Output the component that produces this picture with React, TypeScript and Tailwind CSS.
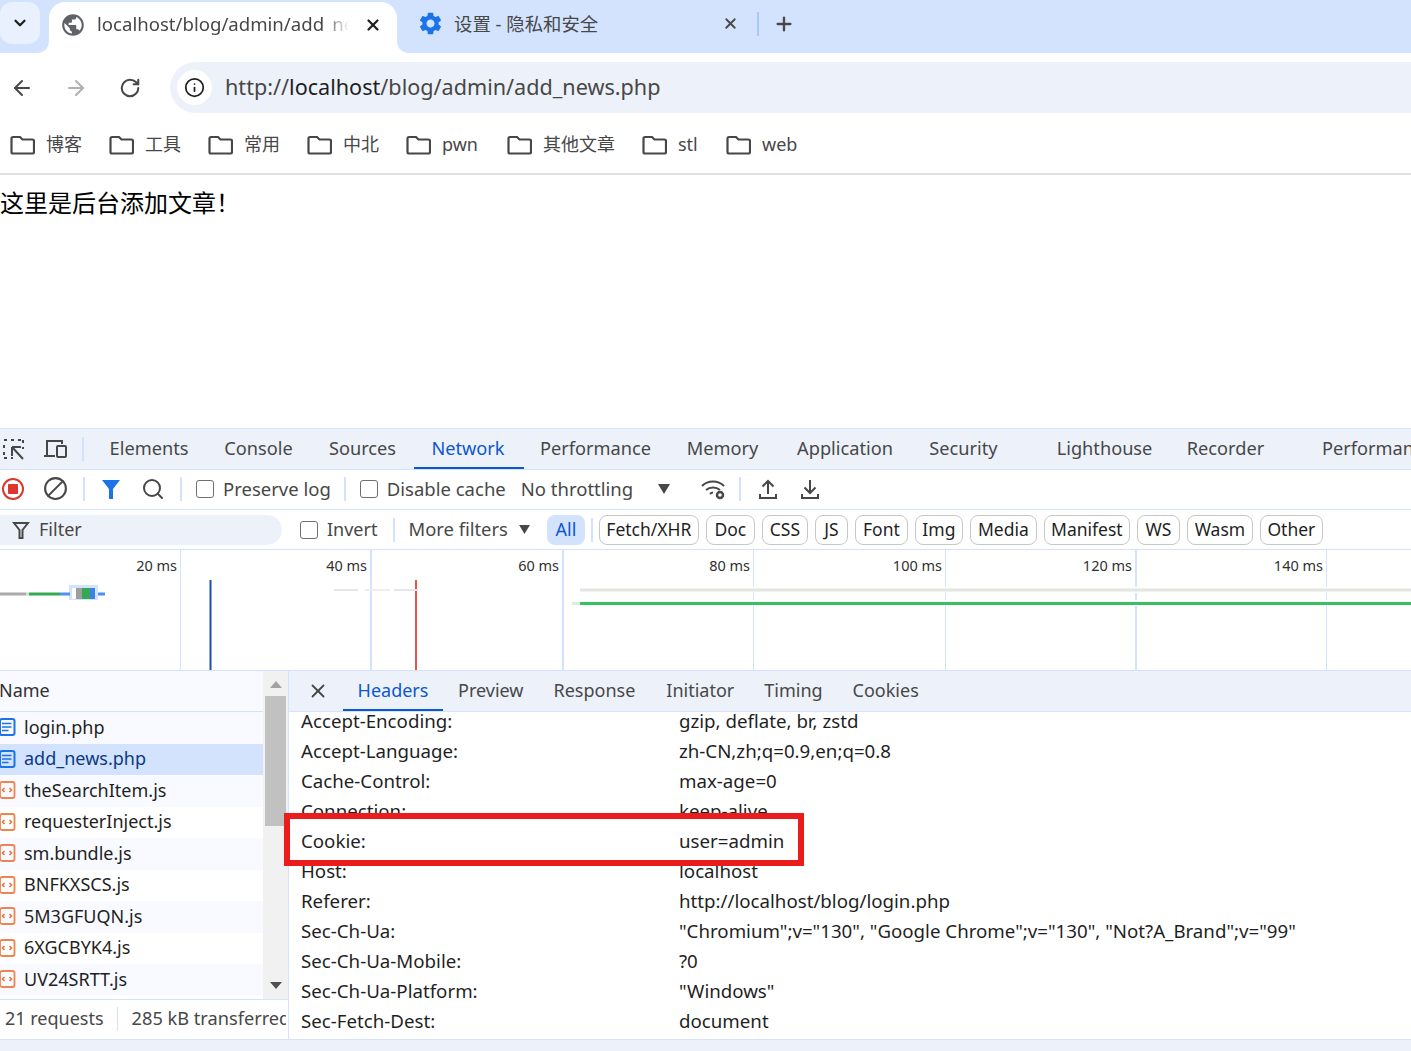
import React from 'react'
import { ArrowLeft, ArrowRight, Ban, ChevronDown, Info, Plus, RotateCw, Search, X } from 'lucide-react'
import { MdPublic, MdSettings } from 'react-icons/md'

const bookmarks = [
  { label: '博客', cls: '' },
  { label: '工具', cls: '' },
  { label: '常用', cls: '' },
  { label: '中北', cls: '' },
  { label: 'pwn', cls: 'w-[38px]' },
  { label: '其他文章', cls: '' },
  { label: 'stl', cls: 'w-[21px]' },
  { label: 'web', cls: '' },
]

const tabs = [
  { label: 'Elements', left: 'ml-[26px]', w: 'w-[78px]' },
  { label: 'Console', left: 'ml-[36px]', w: 'w-[69px]' },
  { label: 'Sources', left: 'ml-[36px]', w: 'w-[67px]' },
  { label: 'Network', left: 'ml-[35px]', w: 'w-[74px]' },
  { label: 'Performance', left: 'ml-[36px]', w: 'w-[109px]' },
  { label: 'Memory', left: 'ml-[36px]', w: 'w-[73px]' },
  { label: 'Application', left: 'ml-[37px]', w: 'w-[98px]' },
  { label: 'Security', left: 'ml-[35px]', w: 'w-[69px]' },
  { label: 'Lighthouse', left: 'ml-[59px]', w: 'w-[95px]' },
  { label: 'Recorder', left: 'ml-[35px]', w: 'w-[77px]' },
  { label: 'Performance', left: 'ml-[59px]', w: 'w-[109px]' },
]

const chips = [
  { label: 'Fetch/XHR', w: 'w-[100px]' },
  { label: 'Doc', w: 'w-[49px]' },
  { label: 'CSS', w: 'w-[46px]' },
  { label: 'JS', w: 'w-[33px]' },
  { label: 'Font', w: 'w-[53px]' },
  { label: 'Img', w: 'w-[48px]' },
  { label: 'Media', w: 'w-[67px]' },
  { label: 'Manifest', w: 'w-[86px]' },
  { label: 'WS', w: 'w-[43px]' },
  { label: 'Wasm', w: 'w-[66px]' },
  { label: 'Other', w: 'w-[63px]' },
]

const ticks = [
  { label: '20 ms', cls: 'w-[181px] border-r' },
  { label: '40 ms', cls: 'w-[191px] border-r-2' },
  { label: '60 ms', cls: 'w-[192px] border-r-2' },
  { label: '80 ms', cls: 'w-[190px] border-r' },
  { label: '100 ms', cls: 'w-[192px] border-r' },
  { label: '120 ms', cls: 'w-[191px] border-r-2' },
  { label: '140 ms', cls: 'w-[190px] border-r' },
]

const files = [
  { name: 'login.php', doc: true },
  { name: 'add_news.php', doc: true, selected: true },
  { name: 'theSearchItem.js' },
  { name: 'requesterInject.js' },
  { name: 'sm.bundle.js' },
  { name: 'BNFKXSCS.js' },
  { name: '5M3GFUQN.js' },
  { name: '6XGCBYK4.js' },
  { name: 'UV24SRTT.js' },
]

const headers = [
  ['Accept-Encoding:', 'gzip, deflate, br, zstd'],
  ['Accept-Language:', 'zh-CN,zh;q=0.9,en;q=0.8'],
  ['Cache-Control:', 'max-age=0'],
  ['Connection:', 'keep-alive'],
  ['Cookie:', 'user=admin'],
  ['Host:', 'localhost'],
  ['Referer:', 'http://localhost/blog/login.php'],
  ['Sec-Ch-Ua:', '"Chromium";v="130", "Google Chrome";v="130", "Not?A_Brand";v="99"'],
  ['Sec-Ch-Ua-Mobile:', '?0'],
  ['Sec-Ch-Ua-Platform:', '"Windows"'],
  ['Sec-Fetch-Dest:', 'document'],
]

const Folder = () => (
  <svg width="25" height="20" viewBox="0 0 25 20" fill="none" stroke="#474747" strokeWidth="2.2" className="shrink-0">
    <path d="M3 2h7l2.5 2.5H22.5A1.5 1.5 0 0 1 24 6v11a1.5 1.5 0 0 1-1.5 1.5H3A1.5 1.5 0 0 1 1.5 17V3.5A1.5 1.5 0 0 1 3 2z" />
  </svg>
)

const Checkbox = () => <span className="block w-[18px] h-[18px] rounded-[3px] border-[1.5px] border-[#6f6f6f] bg-white shrink-0" />

const Divider = () => <span className="block w-[2px] h-6 bg-[#d3e3fd] shrink-0" />

const FileIcon = ({ doc }: { doc?: boolean }) =>
  doc ? (
    <svg width="16" height="18" viewBox="0 0 16 18" fill="none" className="shrink-0">
      <rect x="0" y="1" width="14.5" height="16" rx="2" stroke="#1a73e8" strokeWidth="2" />
      <path d="M2 5.5h9.5M2 9h9.5M2 12.5h6.5" stroke="#1a73e8" strokeWidth="1.6" />
    </svg>
  ) : (
    <svg width="16" height="18" viewBox="0 0 16 18" fill="none" className="shrink-0">
      <rect x="0" y="1" width="14.5" height="16" rx="2" stroke="#ee8450" strokeWidth="1.8" />
      <path d="M4.5 7 2.5 9l2 2M9.5 7l2 2-2 2" stroke="#e8703a" strokeWidth="1.5" />
    </svg>
  )

export default function App() {
  return (
    <div className="w-[1411px] h-[1051px] overflow-hidden bg-white text-[#1f1f1f] flex flex-col font-['Noto_Sans','Noto_Sans_CJK_SC',sans-serif]">
      {/* tab strip */}
      <div className="h-[53px] bg-[#d3e3fd] flex shrink-0">
        <div className="w-[40px] h-[42px] mt-[2px] rounded-xl bg-[#e9f0fe] flex items-center justify-center shrink-0">
          <ChevronDown size={18} strokeWidth={3} color="#1f1f1f" />
        </div>
        <div className="relative ml-[9px] mt-[2px] w-[348px] h-[51px] bg-white rounded-t-2xl flex items-center shrink-0 pb-[6px]">
          <svg width="12" height="12" viewBox="0 0 12 12" className="absolute -left-[12px] bottom-0">
            <path d="M12 0v12H0c7 0 12-5 12-12z" fill="#fff" />
          </svg>
          <svg width="12" height="12" viewBox="0 0 12 12" className="absolute -right-[12px] bottom-0">
            <path d="M0 0v12h12C5 12 0 7 0 0z" fill="#fff" />
          </svg>
          <MdPublic size={26} color="#5f6368" className="ml-[11px] shrink-0" />
          <span className="ml-[11px] w-[252px] text-[18.6px] whitespace-nowrap overflow-hidden text-[#474747] pb-[1px] [mask-image:linear-gradient(to_right,black_90%,transparent)]">
            localhost/blog/admin/add<span className="text-transparent">_</span>news.php
          </span>
          <X size={18} strokeWidth={3} color="#1f1f1f" className="ml-[15px] shrink-0" />
        </div>
        <div className="flex items-center ml-[20px] pb-[6px] shrink-0">
          <MdSettings size={27} color="#1a73e8" className="shrink-0" />
          <span className="ml-[10px] w-[268px] text-[18.4px] text-[#474747] pt-[1px]">设置 - 隐私和安全</span>
          <X size={17} strokeWidth={2.5} color="#474747" className="shrink-0" />
          <span className="ml-[18px] w-[2px] h-6 bg-[#a8c7fa]" />
          <Plus size={22} strokeWidth={2.5} color="#474747" className="ml-[14px]" />
        </div>
      </div>

      {/* address bar */}
      <div className="h-[63px] flex items-center shrink-0 pt-[9px] pb-[3px]">
        <ArrowLeft size={24} color="#474747" strokeWidth={2} className="ml-[10px]" />
        <ArrowRight size={24} color="#b0b0b0" strokeWidth={2} className="ml-[30px]" />
        <RotateCw size={22} color="#474747" strokeWidth={2.2} className="ml-[31px]" />
        <div className="ml-[29px] flex-1 h-[51px] bg-[#edf2fa] rounded-l-[26px] flex items-center">
          <span className="ml-[7px] w-[35px] h-[35px] rounded-full bg-white flex items-center justify-center">
            <Info size={21} color="#1f1f1f" strokeWidth={2} />
          </span>
          <span className="ml-[13px] text-[21.6px] text-[#474747]">
            http://<span className="text-[#1f1f1f]">localhost</span>/blog/admin/add_news.php
          </span>
        </div>
      </div>

      {/* bookmarks */}
      <div className="h-[57px] flex items-center pl-[10px] gap-[27px] shrink-0">
        {bookmarks.map((b) => (
          <div key={b.label} className="flex items-center gap-[11px] text-[18px] text-[#474747]">
            <Folder />
            <span className={b.cls}>{b.label}</span>
          </div>
        ))}
      </div>
      <div className="h-[2px] bg-[#e0e0e0] shrink-0" />

      {/* page */}
      <div className="h-[253px] shrink-0 text-[24px] text-black pt-[10px]">这里是后台添加文章！</div>

      {/* devtools tabs */}
      <div className="h-[42px] bg-[#edf2fa] border-y border-[#d3e3fd] flex items-stretch shrink-0 overflow-hidden">
        <div className="flex items-center shrink-0">
          <svg width="26" height="24" viewBox="0 0 26 24" fill="none" stroke="#474747" strokeWidth="2" className="ml-[1px]">
            <path d="M3 3h3M10 3h3M17 3h3M22 3v3M22 10v2M3 8v3M3 15v3M3 21h3M10 21h2" strokeDasharray="3 2" />
            <path d="M11 10h9M11 10v9M11 10l11 12" />
          </svg>
          <svg width="26" height="24" viewBox="0 0 26 24" fill="none" stroke="#474747" strokeWidth="2" className="ml-[15px]">
            <path d="M2 19h11M5 18V4h15v3" />
            <rect x="15" y="9" width="9" height="11" rx="1" />
          </svg>
          <span className="ml-[14px] w-[2px] h-6 bg-[#d3e3fd]" />
        </div>
        {tabs.map((t, i) => (
          <div key={i} className={'relative shrink-0 flex items-center justify-center whitespace-nowrap text-[18.2px] pb-[1px] ' + t.left + ' ' + t.w + (t.label === 'Network' ? ' text-[#0b57d0]' : ' text-[#474747]')}>
            {t.label}
            {t.label === 'Network' && <span className="absolute -left-[17px] -right-[19px] bottom-0 h-[2px] bg-[#0b57d0]" />}
          </div>
        ))}
      </div>

      {/* network toolbar */}
      <div className="h-[40px] border-b border-[#d3e3fd] flex items-center shrink-0 text-[18.5px] text-[#474747] pb-[2px]">
        <svg width="24" height="24" viewBox="0 0 24 24" className="ml-[1px] shrink-0">
          <circle cx="12" cy="12" r="10" fill="none" stroke="#dc362e" strokeWidth="2" />
          <rect x="7" y="7" width="10" height="10" rx="1" fill="#dc362e" />
        </svg>
        <Ban size={25} color="#474747" strokeWidth={2} className="ml-[18px] shrink-0 -scale-x-100" />
        <span className="ml-[15px]"><Divider /></span>
        <svg width="24" height="24" viewBox="0 0 24 24" className="ml-[14px] shrink-0">
          <path d="M3 3h18l-7 9v10h-4V12z" fill="#1a73e8" />
        </svg>
        <Search size={24} color="#474747" strokeWidth={2} className="ml-[18px] shrink-0" />
        <span className="ml-[15px]"><Divider /></span>
        <span className="ml-[14px] flex items-center"><Checkbox /></span>
        <span className="ml-[9px] whitespace-nowrap">Preserve log</span>
        <span className="ml-[13px]"><Divider /></span>
        <span className="ml-[14px] flex items-center"><Checkbox /></span>
        <span className="ml-[9px] whitespace-nowrap">Disable cache</span>
        <span className="ml-[15px] whitespace-nowrap">No throttling</span>
        <svg width="12" height="10" viewBox="0 0 12 10" className="ml-[25px]"><path d="M0 0h12L6 10z" fill="#474747" /></svg>
        <svg width="28" height="24" viewBox="0 0 28 24" fill="none" stroke="#474747" strokeWidth="2" className="ml-[30px] shrink-0">
          <path d="M2 9c6-6 16-6 22 0M6 13c4-3.5 10-3.5 14 0M10 17c1-1 2-1.5 3-1.5" />
          <circle cx="20" cy="18" r="3" strokeWidth="2.5" />
        </svg>
        <span className="ml-[11px]"><Divider /></span>
        <svg width="24" height="24" viewBox="0 0 24 24" fill="none" stroke="#474747" strokeWidth="2" className="ml-[15px] shrink-0">
          <path d="M12 17V4M6.5 9.5 12 4l5.5 5.5M4 17v4h16v-4" />
        </svg>
        <svg width="24" height="24" viewBox="0 0 24 24" fill="none" stroke="#474747" strokeWidth="2" className="ml-[18px] shrink-0">
          <path d="M12 3v13M6.5 10.5 12 16l5.5-5.5M4 17v4h16v-4" />
        </svg>
      </div>

      {/* filter bar */}
      <div className="h-[40px] border-b border-[#d3e3fd] flex items-center shrink-0 text-[18px] text-[#474747]">
        <div className="w-[282px] h-[30px] rounded-r-[15px] bg-[#edf2fa] flex items-center shrink-0">
          <svg width="18" height="20" viewBox="0 0 18 20" fill="none" stroke="#474747" strokeWidth="2" className="ml-[12px]">
            <path d="M2 3h14l-5.5 7v8h-3v-8z" />
          </svg>
          <span className="ml-[9px]">Filter</span>
        </div>
        <span className="ml-[18px] flex items-center"><Checkbox /></span>
        <span className="ml-[9px]">Invert</span>
        <span className="ml-[16px]"><Divider /></span>
        <span className="ml-[13px] whitespace-nowrap text-[18.4px] pb-[2px]">More filters</span>
        <svg width="11" height="9" viewBox="0 0 12 10" className="ml-[11px]"><path d="M0 0h12L6 10z" fill="#474747" /></svg>
        <span className="ml-[17px] w-[38px] h-[30px] rounded-lg bg-[#d3e3fd] text-[#0b57d0] flex items-center justify-center">All</span>
        <span className="ml-[6px]"><Divider /></span>
        <div className="ml-[6px] flex gap-[7px]">
          {chips.map((c) => (
            <span key={c.label} className={'h-[30px] rounded-lg border border-[#c7c7c7] text-[#1f1f1f] text-[17.5px] flex items-center justify-center whitespace-nowrap ' + c.w}>{c.label}</span>
          ))}
        </div>
      </div>

      {/* overview timeline */}
      <div className="relative h-[121px] border-b border-[#d3e3fd] flex shrink-0 overflow-hidden">
        {ticks.map((t) => (
          <div key={t.label} className={'shrink-0 border-[#d3e3fd] text-right pr-[3px] pt-[5px] text-[14.5px] text-[#303030] ' + t.cls}>{t.label}</div>
        ))}
        <svg width="1411" height="120" viewBox="0 550 1411 120" className="absolute left-0 top-0">
          <rect x="69" y="585" width="29" height="15" fill="#d3e3fd" />
          <rect x="0" y="592.5" width="26" height="3" fill="#aaaaaa" />
          <rect x="26" y="592.5" width="3" height="3" fill="#bfe6cb" />
          <rect x="29" y="592.5" width="31" height="3" fill="#34a853" />
          <rect x="60" y="592.5" width="10" height="3" fill="#4d90f5" />
          <rect x="72" y="588" width="4" height="11" fill="#fff" />
          <rect x="76" y="588" width="6" height="11" fill="#9e9e9e" />
          <rect x="82" y="588" width="8" height="11" fill="#34a853" />
          <rect x="90" y="588" width="5" height="11" fill="#3b82e6" />
          <rect x="98" y="592.5" width="7" height="3" fill="#4d90f5" />
          <rect x="209.5" y="580" width="2" height="90" fill="#1a4fb5" />
          <rect x="415" y="580" width="2" height="90" fill="#e5534b" />
          <rect x="334" y="589" width="24" height="2" fill="#e6e6e6" />
          <rect x="365" y="589" width="25" height="2" fill="#eeeeee" />
          <rect x="394" y="589" width="24" height="2" fill="#e6e6e6" />
          <rect x="572" y="587" width="839" height="6" fill="#fff" />
          <rect x="572" y="600" width="839" height="6" fill="#fff" />
          <rect x="580" y="588.5" width="831" height="3" fill="#e4e5e1" />
          <rect x="572" y="602" width="8" height="3" fill="#d5efdc" />
          <rect x="580" y="602" width="831" height="3" fill="#34c25c" />
        </svg>
      </div>

      {/* request panel */}
      <div className="h-[368px] flex shrink-0">
        <div className="w-[289px] border-r border-[#d3e3fd] flex flex-col shrink-0 overflow-hidden">
          <div className="flex h-[328px]">
            <div className="w-[263px] shrink-0">
              <div className="h-[41px] border-b border-[#d3e3fd] bg-[#f8faff] flex items-center text-[18px] text-[#303030] -indent-[1px] pb-[2px]">Name</div>
              {files.map((f, i) => (
                <div key={f.name} className={'h-[31.5px] flex items-center text-[18px] whitespace-nowrap pb-[1px] ' + (f.selected ? 'bg-[#d3e3fd] text-[#0a3a80]' : i % 2 === 0 ? 'bg-[#f8faff] text-[#1f1f1f]' : 'bg-white text-[#1f1f1f]')}>
                  <FileIcon doc={f.doc} />
                  <span className="ml-[8px]">{f.name}</span>
                </div>
              ))}
            </div>
            <div className="w-[25px] bg-[#f1f1f1] shrink-0 flex flex-col items-center pt-[10px]">
              <svg width="12" height="7" viewBox="0 0 12 7"><path d="M0 7h12L6 0z" fill="#a3a3a3" /></svg>
              <div className="mt-[8px] w-[21px] h-[130px] bg-[#c1c1c1]" />
              <svg width="12" height="7" viewBox="0 0 12 7" className="mt-[156px]"><path d="M0 0h12L6 7z" fill="#505050" /></svg>
            </div>
          </div>
          <div className="h-[40px] border-t border-[#d3e3fd] flex items-center text-[18px] text-[#474747] whitespace-nowrap pb-[2px]">
            <span className="ml-[5px]">21 requests</span>
            <span className="ml-[13px] w-[1px] h-6 bg-[#d3e3fd]" />
            <span className="ml-[14px] w-[154px] overflow-hidden text-[18.2px]">285 kB transferred</span>
          </div>
        </div>

        <div className="flex-1 flex flex-col min-w-0">
          <div className="h-[41px] bg-[#edf2fa] border-b border-[#d3e3fd] flex items-stretch text-[18px] text-[#474747] shrink-0 pb-[1px]">
            <span className="ml-[18px] flex items-center"><X size={22} color="#474747" strokeWidth={2} /></span>
            <span className="relative ml-[14px] w-[100px] flex items-center justify-center text-[#0b57d0] -mb-[1px] pb-[1px]">
              Headers
              <span className="absolute left-0 right-0 bottom-0 h-[2px] bg-[#0b57d0]" />
            </span>
            <span className="ml-[15px] flex items-center">Preview</span>
            <span className="ml-[30px] flex items-center">Response</span>
            <span className="ml-[31px] flex items-center">Initiator</span>
            <span className="ml-[30px] flex items-center">Timing</span>
            <span className="ml-[30px] flex items-center">Cookies</span>
          </div>
          <div className="relative z-10 -ml-[5px] pl-[5px] flex-1 overflow-hidden text-[18.7px] text-[#1f1f1f]">
            <div className="-mt-[6px]">
              {headers.map(([k, v]) => {
                const hit = k === 'Cookie:'
                return (
                  <div key={k} className={'relative h-[30px] flex items-center pl-[12px] whitespace-nowrap' + (hit ? ' z-10' : '')}>
                    {hit && <span className="absolute -left-[5px] top-[-13px] w-[520px] h-[53px] bg-white border-[6px] border-[#ea1c1c]" />}
                    <span className="relative w-[378px] shrink-0">{k}</span>
                    <span className="relative">{v}</span>
                  </div>
                )
              })}
            </div>
          </div>
        </div>
      </div>

      <div className="flex-1 bg-[#edf2fa] border-t border-[#d3e3fd]" />
    </div>
  )
}
